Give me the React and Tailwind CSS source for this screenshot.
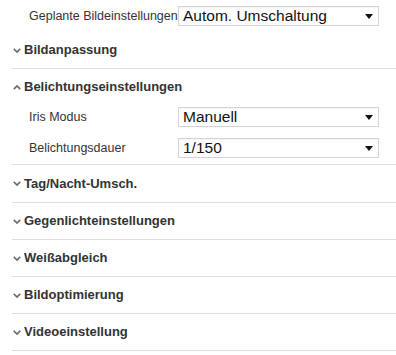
import React from 'react';

const font = { fontFamily: '"Liberation Sans", Arial, sans-serif' };

function Chevron({ up }) {
    return (
        <svg width="8" height="5" viewBox="0 0 8 5" className="shrink-0 mr-[3px] ml-[1px]">
            <polyline
                points={up ? '0.8,4.2 4,1 7.2,4.2' : '0.8,0.8 4,4 7.2,0.8'}
                fill="none"
                stroke="#6b6b6b"
                strokeWidth="1.7"
            />
        </svg>
    );
}

function Select({ value }) {
    return (
        <div className="w-[201px] h-[20px] border border-[#d4d4d4] bg-white flex items-center justify-between pl-[4px] pr-[5px] shadow-[inset_0_1px_1px_rgba(0,0,0,0.04)]">
            <span className="text-[15.5px] leading-none text-[#111]">{value}</span>
            <svg width="8" height="5" viewBox="0 0 8 5">
                <polygon points="0,0 8,0 4,5" fill="#111" />
            </svg>
        </div>
    );
}

function Row({ label, value }) {
    return (
        <div className="flex items-center">
            <span className="w-[149px] shrink-0 text-[12.5px] text-[#333] whitespace-nowrap">{label}</span>
            <Select value={value} />
        </div>
    );
}

function Section({ title, open, tall, children }) {
    return (
        <div className="border-b border-[#dedede]">
            <div className={`${tall ? 'h-[37px]' : 'h-[36px]'} flex items-center`}>
                <Chevron up={open} />
                <span className="text-[13px] font-bold text-[#333]">{title}</span>
            </div>
            {children}
        </div>
    );
}

export default function App() {
    return (
        <div className="w-[396px] h-[355px] bg-white pl-[12px] overflow-hidden" style={font}>
            <div className="pt-[6px] pb-[6px] pl-[17px]">
                <Row label="Geplante Bildeinstellungen" value="Autom. Umschaltung" />
            </div>
            <Section title="Bildanpassung" />
            <Section title="Belichtungseinstellungen" open>
                <div className="pl-[17px] pt-[2px] pb-[6px] flex flex-col gap-[11px]">
                    <Row label="Iris Modus" value="Manuell" />
                    <Row label="Belichtungsdauer" value="1/150" />
                </div>
            </Section>
            <Section title="Tag/Nacht-Umsch." tall />
            <Section title="Gegenlichteinstellungen" />
            <Section title="Weißabgleich" />
            <Section title="Bildoptimierung" />
            <Section title="Videoeinstellung" />
        </div>
    );
}
